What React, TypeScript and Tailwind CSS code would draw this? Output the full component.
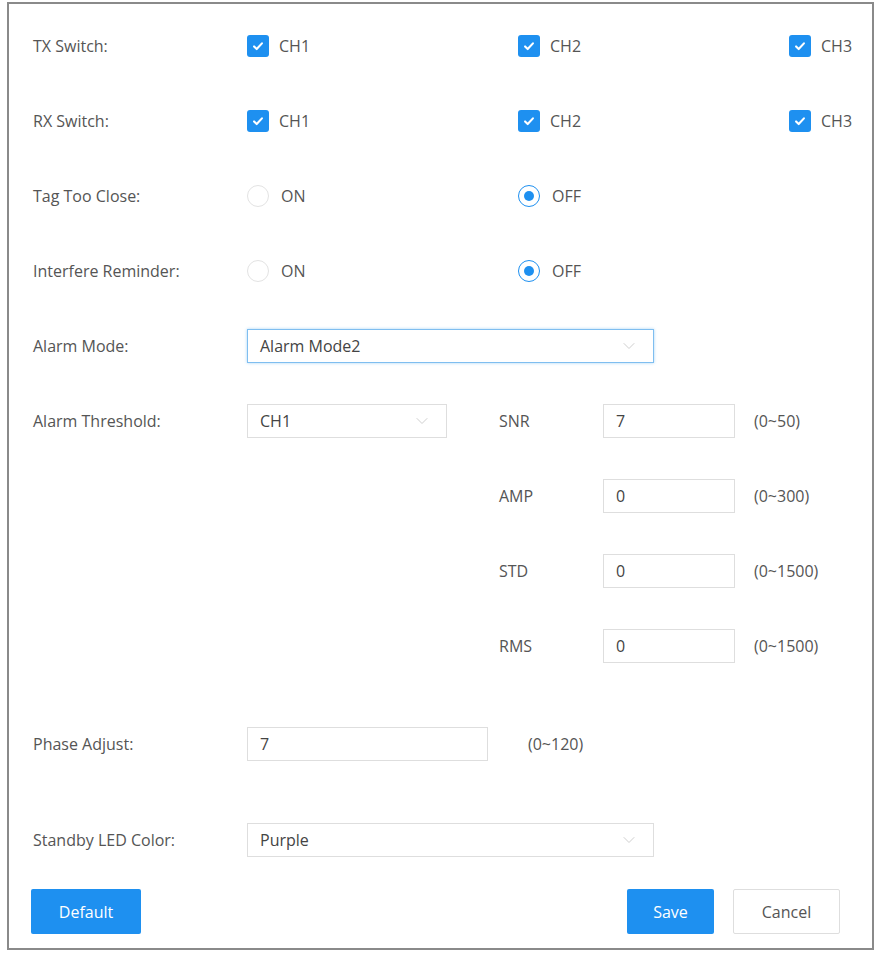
import { ChevronDown } from "lucide-react";

const font = { fontFamily: '"Open Sans", "Noto Sans", sans-serif' };

function Check({ label }: { label: string }) {
  return (
    <div className="flex items-center gap-[10px]">
      <span className="flex h-[22px] w-[22px] items-center justify-center rounded-[3px] bg-[#1e90f0]">
        <svg viewBox="0 0 16 16" className="h-[14px] w-[14px]" fill="none" stroke="white" strokeWidth="2.4" strokeLinecap="round" strokeLinejoin="round">
          <path d="M3.5 8.5l3 3 6-6.5" />
        </svg>
      </span>
      <span>{label}</span>
    </div>
  );
}

function Radio({ label, on }: { label: string; on?: boolean }) {
  return (
    <div className="flex items-center gap-[12px]">
      <span className={`flex h-[22px] w-[22px] items-center justify-center rounded-full border ${on ? "border-[#1e90f0]" : "border-[#e3e3e3]"} bg-white`}>
        {on && <span className="h-[10px] w-[10px] rounded-full bg-[#1e90f0]" />}
      </span>
      <span>{label}</span>
    </div>
  );
}

function Select({ value, w, focus }: { value: string; w: string; focus?: boolean }) {
  return (
    <div className={`flex h-[34px] ${w} items-center justify-between border pl-[12px] pr-[14px] ${focus ? "border-[#7fbef0] shadow-[0_0_3px_#a8d4f5]" : "border-[#dedede]"} bg-white`}>
      <span className="text-[#444]">{value}</span>
      <ChevronDown className="h-[20px] w-[20px] text-[#cfcfcf]" strokeWidth={1.2} />
    </div>
  );
}

function Input({ value, w }: { value: string; w: string }) {
  return (
    <div className={`flex h-[34px] ${w} items-center border border-[#dedede] bg-white px-[12px] text-[#444]`}>{value}</div>
  );
}

const Label = ({ children }: { children: string }) => <div className="w-[214px] shrink-0">{children}</div>;

export default function App() {
  return (
    <div className="min-h-[953px] bg-white pt-[2px]" style={font}>
      <div className="mx-[7px] h-[948px] border-2 border-[#8a8a8a] pl-[24px] pt-[4px] text-[16px] text-[#555]">
        <div className="flex h-[75px] items-center">
          <Label>TX Switch:</Label>
          <div className="w-[271px]"><Check label="CH1" /></div>
          <div className="w-[271px]"><Check label="CH2" /></div>
          <Check label="CH3" />
        </div>
        <div className="flex h-[75px] items-center">
          <Label>RX Switch:</Label>
          <div className="w-[271px]"><Check label="CH1" /></div>
          <div className="w-[271px]"><Check label="CH2" /></div>
          <Check label="CH3" />
        </div>
        <div className="flex h-[75px] items-center">
          <Label>Tag Too Close:</Label>
          <div className="w-[271px]"><Radio label="ON" /></div>
          <Radio label="OFF" on />
        </div>
        <div className="flex h-[75px] items-center">
          <Label>Interfere Reminder:</Label>
          <div className="w-[271px]"><Radio label="ON" /></div>
          <Radio label="OFF" on />
        </div>
        <div className="flex h-[75px] items-center">
          <Label>Alarm Mode:</Label>
          <Select value="Alarm Mode2" w="w-[407px]" focus />
        </div>
        <div className="flex">
          <div className="flex h-[75px] items-center">
            <Label>Alarm Threshold:</Label>
            <Select value="CH1" w="w-[200px]" />
          </div>
          <div className="ml-[52px] flex flex-col">
            {[["SNR", "7", "(0~50)"], ["AMP", "0", "(0~300)"], ["STD", "0", "(0~1500)"], ["RMS", "0", "(0~1500)"]].map(([l, v, r]) => (
              <div key={l} className="flex h-[75px] items-center">
                <div className="w-[104px]">{l}</div>
                <Input value={v} w="w-[132px]" />
                <div className="ml-[19px]">{r}</div>
              </div>
            ))}
          </div>
        </div>
        <div className="mt-[23px] flex h-[75px] items-center">
          <Label>Phase Adjust:</Label>
          <Input value="7" w="w-[241px]" />
          <div className="ml-[40px]">(0~120)</div>
        </div>
        <div className="mt-[21px] flex h-[75px] items-center">
          <Label>Standby LED Color:</Label>
          <Select value="Purple" w="w-[407px]" />
        </div>
        <div className="mt-[12px] flex items-center pr-[32px]">
          <button className="ml-[-2px] h-[45px] w-[110px] rounded-[2px] bg-[#1e90f0] text-white">Default</button>
          <div className="flex-1" />
          <button className="h-[45px] w-[87px] rounded-[2px] bg-[#1e90f0] text-white">Save</button>
          <button className="ml-[19px] h-[45px] w-[107px] rounded-[2px] border border-[#dedede] bg-white text-[#555]">Cancel</button>
        </div>
      </div>
    </div>
  );
}
